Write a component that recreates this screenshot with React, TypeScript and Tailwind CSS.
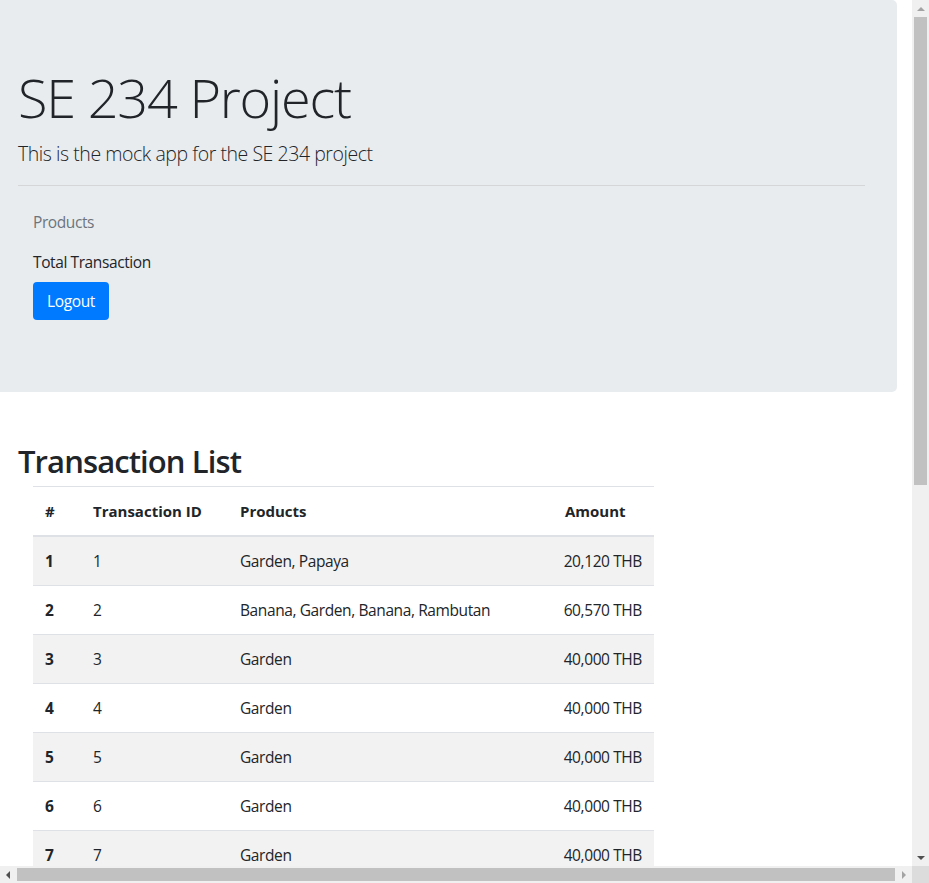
import React from "react";

const rows = [
  { n: 1, id: 1, products: "Garden, Papaya", amount: "20,120 THB" },
  { n: 2, id: 2, products: "Banana, Garden, Banana, Rambutan", amount: "60,570 THB" },
  { n: 3, id: 3, products: "Garden", amount: "40,000 THB" },
  { n: 4, id: 4, products: "Garden", amount: "40,000 THB" },
  { n: 5, id: 5, products: "Garden", amount: "40,000 THB" },
  { n: 6, id: 6, products: "Garden", amount: "40,000 THB" },
  { n: 7, id: 7, products: "Garden", amount: "40,000 THB" },
  { n: 8, id: 8, products: "Garden", amount: "40,000 THB" },
];

function Arrow({ dir, light }: { dir: "up" | "down" | "left" | "right"; light?: boolean }) {
  const pts =
    dir === "up"
      ? "0,4 4,0 8,4"
      : dir === "down"
      ? "0,0 8,0 4,4"
      : dir === "left"
      ? "4,0 4,8 0,4"
      : "0,0 0,8 4,4";
  const w = dir === "up" || dir === "down" ? 8 : 4;
  const h = dir === "up" || dir === "down" ? 4 : 8;
  return (
    <svg width={w} height={h} viewBox={`0 0 ${w} ${h}`}>
      <polygon points={pts} fill={light ? "#a3a3a3" : "#505050"} />
    </svg>
  );
}

export default function App() {
  return (
    <div className="flex h-[883px] w-[929px] flex-col overflow-hidden bg-white font-['Open_Sans',sans-serif] text-[15.5px] tracking-[-0.4px] text-[#212529]">
      <div className="flex h-[866px] w-[929px]">
        <div className="h-[866px] w-[912px] overflow-hidden">
          {/* Jumbotron */}
          <div className="h-[392px] w-[897px] rounded-r-[5px] bg-[#e9ecef] pl-[18px] pr-[32px] pt-[64px]">
            <h1 className="text-[54px] font-light leading-[67px] tracking-[-1.2px]">SE 234 Project</h1>
            <p className="mt-[8px] text-[19.5px] font-light leading-[30px] tracking-[-0.45px]">
              This is the mock app for the SE 234 project
            </p>
            <hr className="mt-[16px] border-t border-[#d4d6d8]" />
            <div className="mt-[16px] flex flex-col items-start">
              <span className="px-[15px] py-[8px] leading-[24px] text-[#6c757d]">Products</span>
              <span className="px-[15px] py-[8px] leading-[24px]">Total Transaction</span>
              <button className="ml-[15px] h-[38px] w-[76px] rounded-[4px] bg-[#007bff] text-center leading-[24px] text-white">
                Logout
              </button>
            </div>
          </div>

          {/* Transaction list */}
          <h2 className="ml-[18px] mt-[50px] text-[31px] font-semibold leading-[38px] tracking-[-0.9px]">
            Transaction List
          </h2>
          <table className="ml-[33px] mt-[6px] w-[621px] table-fixed border-collapse leading-[24px]">
            <colgroup>
              <col className="w-[48px]" />
              <col className="w-[147px]" />
              <col className="w-[322px]" />
              <col className="w-[104px]" />
            </colgroup>
            <thead>
              <tr className="border-t border-[#dee2e6]">
                <th className="border-b-2 border-[#dee2e6] p-[12px] text-left text-[15px] font-bold tracking-[0px]">#</th>
                <th className="border-b-2 border-[#dee2e6] p-[12px] text-left text-[15px] font-bold tracking-[0px]">Transaction ID</th>
                <th className="border-b-2 border-[#dee2e6] p-[12px] text-left text-[15px] font-bold tracking-[0px]">Products</th>
                <th className="whitespace-nowrap border-b-2 border-[#dee2e6] py-[12px] pl-[15px] text-left text-[15px] font-bold tracking-[0px]">Amount</th>
              </tr>
            </thead>
            <tbody>
              {rows.map((r, i) => (
                <tr key={r.n} className={`border-t border-[#dee2e6] ${i % 2 === 0 ? "bg-[#f2f2f2]" : "bg-white"}`}>
                  <th className="p-[12px] text-left font-bold">{r.n}</th>
                  <td className="p-[12px]">{r.id}</td>
                  <td className="whitespace-nowrap p-[12px]">{r.products}</td>
                  <td className="whitespace-nowrap p-[12px] text-right">{r.amount}</td>
                </tr>
              ))}
            </tbody>
          </table>
        </div>
        {/* vertical scrollbar */}
        <div className="flex h-[866px] w-[17px] flex-col items-center bg-[#f0f0f0]">
          <div className="flex h-[17px] items-center justify-center">
            <Arrow dir="up" light />
          </div>
          <div className="h-[468px] w-[13px] bg-[#c1c1c1]" />
          <div className="flex-1" />
          <div className="flex h-[17px] items-center justify-center">
            <Arrow dir="down" />
          </div>
        </div>
      </div>
      {/* horizontal scrollbar */}
      <div className="flex h-[17px] w-[929px]">
        <div className="flex h-[17px] w-[912px] items-center bg-[#f0f0f0]">
          <div className="flex h-[17px] w-[15px] items-center justify-center">
            <Arrow dir="left" />
          </div>
          <div className="ml-[2px] h-[13px] w-[878px] bg-[#c1c1c1]" />
          <div className="flex-1" />
          <div className="flex h-[17px] w-[17px] items-center justify-center">
            <Arrow dir="right" light />
          </div>
        </div>
        <div className="h-[17px] w-[17px] bg-[#dcdcdc]" />
      </div>
    </div>
  );
}
